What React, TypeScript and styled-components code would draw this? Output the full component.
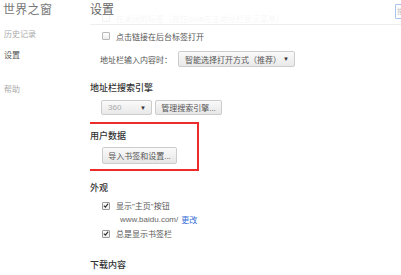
import React from "react";
import styled, { createGlobalStyle } from "styled-components";

const Global = createGlobalStyle`
  html, body { margin: 0; padding: 0; background: #fff; }
  body {
    width: 401px; height: 275px; overflow: hidden;
    font-family: "Liberation Sans", "Noto Sans CJK SC", sans-serif;
    color: #555;
  }
  * { box-sizing: border-box; }
`;

const Page = styled.div`
  display: flex;
  width: 401px;
  height: 275px;
  overflow: hidden;
`;

const Sidebar = styled.nav`
  width: 90px;
  flex: none;
  display: flex;
  flex-direction: column;
  padding: 2px 0 0 3px;
`;

const Brand = styled.div`
  font-size: 12px;
  line-height: 16px;
  height: 16px;
  color: #777;
  letter-spacing: 0.3px;
`;

const NavItem = styled.div<{ $active?: boolean; $gap: number }>`
  font-size: 8px;
  line-height: 12px;
  height: 12px;
  margin-top: ${(p) => p.$gap}px;
  color: ${(p) => (p.$active ? "#555" : "#aaa")};
  padding-left: 1px;
`;

const Main = styled.main`
  position: relative;
  flex: 1;
  height: 275px;
  overflow: hidden;
`;

const Header = styled.header`
  position: absolute;
  top: 0;
  left: 0;
  right: 0;
  height: 25px;
  display: flex;
  align-items: flex-start;
  justify-content: space-between;
  background: rgba(255, 255, 255, 0.82);
  border-bottom: 1px solid #eee;
  padding-top: 3px;
`;

const Title = styled.h1`
  margin: 0;
  font-size: 12px;
  line-height: 15px;
  font-weight: normal;
  color: #666;
`;

const Search = styled.div`
  width: 60px;
  height: 15px;
  margin-top: 1px;
  margin-right: -54px;
  border: 1px solid #a9c4f0;
  border-radius: 1px;
  font-size: 7px;
  line-height: 13px;
  padding-left: 1px;
  color: #bbb;
`;

const Content = styled.div`
  display: flex;
  flex-direction: column;
  align-items: flex-start;
  padding-top: 11px;
`;

const Row = styled.div<{ $mt?: number; $h?: number; $indent?: number }>`
  display: flex;
  align-items: center;
  height: ${(p) => p.$h ?? 14}px;
  margin-top: ${(p) => p.$mt ?? 0}px;
  padding-left: ${(p) => p.$indent ?? 12}px;
  font-size: 8px;
  color: #555;
  white-space: nowrap;
`;

const Faded = styled(Row)`
  color: #ccc;
`;

const Box = styled.span<{ $checked?: boolean }>`
  width: 8px;
  height: 8px;
  flex: none;
  border: 1px solid ${(p) => (p.$checked ? "#999" : "#b8b8b8")};
  border-radius: 1px;
  background: linear-gradient(#fff, #eee);
  margin-right: 6px;
  display: flex;
  align-items: center;
  justify-content: center;
`;

const Heading = styled.h2<{ $mt: number }>`
  margin: ${(p) => p.$mt}px 0 0 0;
  height: 14px;
  line-height: 14px;
  font-size: 9px;
  font-weight: 500;
  color: #333;
`;

const SelectBox = styled.div<{ $w: number; $muted?: boolean }>`
  width: ${(p) => p.$w}px;
  height: 100%;
  display: flex;
  align-items: center;
  justify-content: space-between;
  padding: 0 5px 0 6px;
  border: 1px solid #ccc;
  border-radius: 2px;
  background: linear-gradient(#fafafa, #e9e9e9);
  color: ${(p) => (p.$muted ? "#aaa" : "#555")};
  font-size: 8px;
`;

const Arrow = styled.span`
  font-size: 6px;
  color: #333;
`;

const Button = styled.div<{ $w: number; $ml?: number }>`
  width: ${(p) => p.$w}px;
  height: 100%;
  margin-left: ${(p) => p.$ml ?? 0}px;
  display: flex;
  align-items: center;
  justify-content: center;
  border: 1px solid #ccc;
  border-radius: 2px;
  background: linear-gradient(#fafafa, #e6e6e6);
  color: #555;
  font-size: 8px;
`;

const Highlight = styled.section`
  margin: 7px 0 0 -16px;
  width: 125px;
  height: 49px;
  border: 2px solid #ee2b2b;
  padding: 5px 0 0 14px;
  display: flex;
  flex-direction: column;
  align-items: flex-start;
`;

const Url = styled.span`
  color: #666;
  margin-left: 6px;
`;

const Link = styled.span`
  color: #3a6fd8;
  margin-left: 3px;
`;

const Check = () => (
  <svg width="7" height="7" viewBox="0 0 7 7">
    <path d="M1 3.6 L2.8 5.4 L6 1.2" fill="none" stroke="#333" strokeWidth="1.4" />
  </svg>
);

export default function App() {
  return (
    <>
      <Global />
      <Page>
        <Sidebar>
          <Brand>世界之窗</Brand>
          <NavItem $gap={11}>历史记录</NavItem>
          <NavItem $gap={9} $active>设置</NavItem>
          <NavItem $gap={22}>帮助</NavItem>
        </Sidebar>
        <Main>
          <Content>
            <Faded>
              <Box />
              在关闭的标签（按住Shift在主地址栏显示菜单）
            </Faded>
            <Row $mt={4}>
              <Box />
              点击链接在后台标签打开
            </Row>
            <Row $mt={8} $h={16} $indent={10}>
              地址栏输入内容时：
              <SelectBox $w={117} style={{ marginLeft: 6 }}>
                智能选择打开方式（推荐）<Arrow>▼</Arrow>
              </SelectBox>
            </Row>
            <Heading $mt={14}>地址栏搜索引擎</Heading>
            <Row $mt={5} $h={15} $indent={11}>
              <SelectBox $w={51} $muted>
                360<Arrow>▼</Arrow>
              </SelectBox>
              <Button $w={67} $ml={3}>管理搜索引擎...</Button>
            </Row>
            <Highlight>
              <Heading $mt={0}>用户数据</Heading>
              <Row $mt={4} $h={17} $indent={12}>
                <Button $w={75}>导入书签和设置...</Button>
              </Row>
            </Highlight>
            <Heading $mt={10}>外观</Heading>
            <Row $mt={4} $h={13}>
              <Box $checked><Check /></Box>
              显示"主页"按钮
            </Row>
            <Row $mt={1} $h={13} $indent={24}>
              <Url>www.baidu.com/</Url>
              <Link>更改</Link>
            </Row>
            <Row $mt={1} $h={13}>
              <Box $checked><Check /></Box>
              总是显示书签栏
            </Row>
            <Heading $mt={18}>下载内容</Heading>
          </Content>
          <Header>
            <Title>设置</Title>
            <Search>搜</Search>
          </Header>
        </Main>
      </Page>
    </>
  );
}
